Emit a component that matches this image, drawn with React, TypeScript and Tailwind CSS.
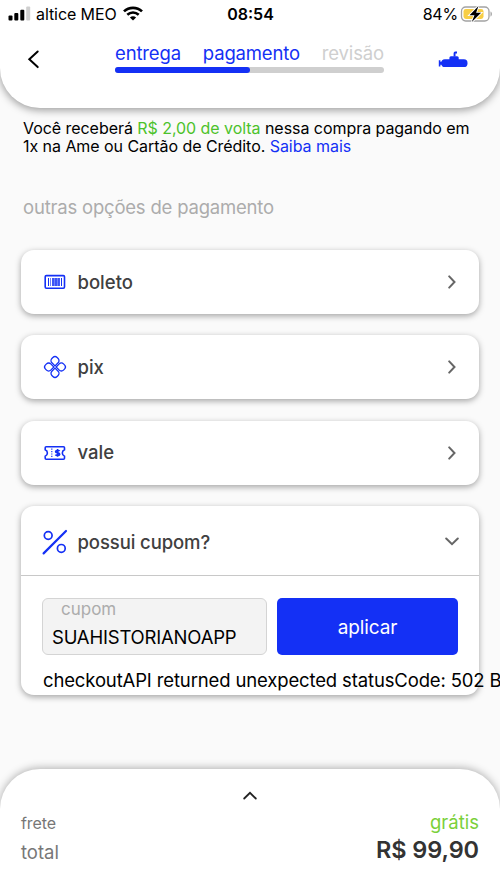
import type { ReactNode } from "react"

type Option = {
  id: string
  label: string
  icon: ReactNode
}

function SignalIcon() {
  return (
    <svg className="shrink-0" width="23" height="15" viewBox="0 0 23 15" fill="#000">
      <rect x="0.5" y="9.5" width="4" height="5" rx="1" />
      <rect x="6.3" y="7" width="4" height="7.5" rx="1" />
      <rect x="12.3" y="3.8" width="4" height="10.7" rx="1" />
      <rect x="18.2" y="0.5" width="4" height="14" rx="1" fill="#cfcfcf" />
    </svg>
  )
}

function WifiIcon() {
  return (
    <svg className="shrink-0" width="20" height="15" viewBox="0 0 20 15" fill="none" stroke="#000">
      <path d="M1 5.4C6 .6 14 .6 19 5.4" strokeWidth="2.7" />
      <path d="M4.3 8.8c3.3-3 8.1-3 11.4 0" strokeWidth="2.6" />
      <path d="M10 14.4 6.9 11.4c1.7-1.6 4.5-1.6 6.2 0z" fill="#000" stroke="none" />
    </svg>
  )
}

function BatteryIcon() {
  return (
    <svg width="33" height="18" viewBox="0 0 33 18">
      <rect x="1.5" y="2" width="27.5" height="14" rx="4.2" fill="#fff" stroke="#a3a3a3" strokeWidth="1.3" />
      <rect x="3.5" y="4" width="20" height="10" rx="2.4" fill="#f7ce46" />
      <path d="M30.5 6.5c1.9.6 1.9 4.4 0 5z" fill="#a3a3a3" />
      <path
        d="M18.5 1 9.5 10.2h5l-2.7 6.9 9.3-9.3h-5z"
        fill="#000"
        stroke="#fff"
        strokeWidth="1.8"
        paintOrder="stroke"
      />
    </svg>
  )
}

function SubmarineIcon() {
  return (
    <svg width="30" height="17" viewBox="0 0 30 17" fill="#1430f5">
      <path d="M15.6 5.5V2.2Q15.6.6 17.2.6H19v1.900h-1.500v3z" />
      <path d="M11.4 9V6.8q0-1.500 1.500-1.500h6.300q1.500 0 1.500 1.500V9z" />
      <rect x="3.3" y="8.3" width="26.2" height="7.7" rx="3.6" />
      <path d="M.8 9.3h1.600v1.500h2v3H2.400v1.700H.8z" />
    </svg>
  )
}

function BoletoIcon() {
  return (
    <svg width="22" height="16" viewBox="0 0 22 16" fill="none" stroke="#1430f5">
      <rect x="1.2" y="1.6" width="19.3" height="12.7" rx="1.2" strokeWidth="1.6" />
      <path d="M4.5 4v8M17.5 4v8" strokeWidth="1" />
      <path d="M6.5 4v8" strokeWidth="1" strokeOpacity=".6" />
      <path d="M9 4v8M12 4v8M15 4v8" strokeWidth="1.6" />
      <path d="M10.5 4v8M13.5 4v8" strokeWidth="1.4" strokeOpacity=".6" />
    </svg>
  )
}

function PixIcon() {
  const petal = "M.8.8h4.400a3 3 0 0 1 3 3v1.400a3 3 0 0 1-3 3H3.800a3 3 0 0 1-3-3z"
  return (
    <svg width="24" height="24" viewBox="-12 -12 24 24" fill="none" stroke="#1430f5" strokeWidth="1.3">
      <path d={petal} transform="rotate(45)" />
      <path d={petal} transform="rotate(135)" />
      <path d={petal} transform="rotate(225)" />
      <path d={petal} transform="rotate(315)" />
    </svg>
  )
}

function ValeIcon() {
  return (
    <svg width="22" height="16" viewBox="0 0 22 16" fill="none" stroke="#1430f5">
      <path
        d="M2.2 1.7h17.300q1 0 1 1v2.100q-2.200.9-2.200 3.200t2.200 3.200v2.100q0 1-1 1H2.200q-1 0-1-1v-2.100Q3.400 10.300 3.400 8T1.200 4.800V2.700q0-1 1-1z"
        strokeWidth="1.6"
      />
      <path d="M7.8 3.6v9.200" strokeWidth="1.2" strokeDasharray="1.2 1.2" />
      <path
        d="M15.6 6.200c-.5-.9-4-1.100-4 .5 0 1.800 4.100.7 4.100 2.600 0 1.600-3.600 1.500-4.300.3M13.600 4.100v7.700"
        strokeWidth="1.7"
      />
    </svg>
  )
}

function CouponIcon() {
  return (
    <svg width="26" height="26" viewBox="0 0 26 26" fill="none" stroke="#1430f5" strokeLinecap="round">
      <path d="M1.6 24.4 24 2" strokeWidth="2.2" />
      <circle cx="6.2" cy="6.5" r="3.9" strokeWidth="1.7" />
      <circle cx="19.3" cy="19.4" r="3.9" strokeWidth="1.7" />
    </svg>
  )
}

function ChevronRight() {
  return (
    <svg width="8" height="14" viewBox="0 0 8 14" fill="none" stroke="#666" strokeWidth="2" strokeLinecap="round">
      <path d="M1.2 1.4 6.5 7l-5.300 5.600" />
    </svg>
  )
}

export default function App() {
  const options: Option[] = [
    { id: "boleto", label: "boleto", icon: <BoletoIcon /> },
    { id: "pix", label: "pix", icon: <PixIcon /> },
    { id: "vale", label: "vale", icon: <ValeIcon /> },
  ]

  return (
    <div className="flex h-[889px] w-[500px] flex-col overflow-hidden bg-[#fafafa] font-['Inter',sans-serif] text-black">
      {/* Header */}
      <header className="h-[108px] shrink-0 rounded-b-[40px] bg-white shadow-[0_2px_9px_rgba(0,0,0,0.4)]">
        <div className="grid h-[27px] grid-cols-3 items-center pr-[7px] pl-2">
          <div className="flex items-center">
            <SignalIcon />
            <span className="mr-[6px] ml-[5px] text-base tracking-[-0.08px] whitespace-nowrap">altice MEO</span>
            <WifiIcon />
          </div>
          <span className="text-center text-base font-semibold">08:54</span>
          <div className="flex items-center justify-end gap-[2px]">
            <span className="text-base tracking-[-0.2px]">84%</span>
            <BatteryIcon />
          </div>
        </div>
        <div className="flex items-start">
          <svg
            className="mt-[23px] ml-[27px]"
            width="13"
            height="19"
            viewBox="0 0 13 19"
            fill="none"
            stroke="#000"
            strokeWidth="2"
            strokeLinecap="round"
          >
            <path d="M10.7 1.5 2.3 9.300l8.400 7.800" />
          </svg>
          <div className="mt-[13px] ml-[75px] w-[269px]">
            <div className="flex justify-between text-[18.5px] leading-[26px] tracking-[-0.15px] text-[#1430f5]">
              <span>entrega</span>
              <span>pagamento</span>
              <span className="text-[#cfcfcf]">revisão</span>
            </div>
            <div className="mt-px h-[6px] rounded-full bg-[#cfcfcf]">
              <div className="h-full w-1/2 rounded-full bg-[#1430f5]" />
            </div>
          </div>
          <div className="mt-[24px] ml-[54px]">
            <SubmarineIcon />
          </div>
        </div>
      </header>

      <main className="flex-1 px-[21px]">
        <p className="mt-[10.5px] ml-[2px] text-base leading-[18.5px] tracking-[-0.05px] whitespace-nowrap">
          Você receberá <span className="text-[#4cc22b]">R$ 2,00 de volta</span> nessa compra pagando em
          <br />
          1x na Ame ou Cartão de Crédito. <span className="text-[#1430f5]">Saiba mais</span>
        </p>

        <h2 className="mt-[37.5px] ml-[2px] text-[18.5px] leading-[28px] tracking-[-0.2px] text-[#acacac]">
          outras opções de pagamento
        </h2>

        {/* Payment options */}
        <div className="mt-[29px] flex flex-col gap-[21.3px]">
          {options.map((option) => (
            <button
              key={option.id}
              className="flex h-16 items-center rounded-[13px] bg-white pr-[23px] shadow-[0_2px_6px_rgba(0,0,0,0.35)]"
            >
              <span className="flex w-[56.5px] justify-center pl-[11px]">{option.icon}</span>
              <span className="flex-1 pt-px text-left text-[18.5px] font-[450] text-[#404040]">{option.label}</span>
              <ChevronRight />
            </button>
          ))}

          {/* Coupon */}
          <div className="h-[189.5px] rounded-[13px] bg-white shadow-[0_2px_6px_rgba(0,0,0,0.35)]">
            <div className="flex h-[70px] items-center border-b-[1.5px] border-[#c8c8c8] pr-5">
              <span className="flex w-[56.5px] justify-center pt-[3px] pl-[11px]">
                <CouponIcon />
              </span>
              <span className="flex-1 pt-[4px] text-[18.5px] font-[450] tracking-[-0.1px] text-[#404040]">
                possui cupom?
              </span>
              <svg
                className="mt-[2px]"
                width="14"
                height="9"
                viewBox="0 0 14 9"
                fill="none"
                stroke="#666"
                strokeWidth="2"
                strokeLinecap="round"
              >
                <path d="m1.200 1.500 5.800 5.600 5.800-5.600" />
              </svg>
            </div>
            <div className="mt-[22px] flex gap-[10px] px-[21px]">
              <div className="h-[57.5px] w-[225px] rounded-[6px] border border-[#d4d4d4] bg-[#f3f3f3]">
                <div className="pl-[18px] text-[17px] leading-[21px] text-[#acacac]">cupom</div>
                <div className="mt-[5px] pl-[9px] text-[18.5px] leading-[24px] tracking-[-0.2px]">SUAHISTORIANOAPP</div>
              </div>
              <button className="h-[57.5px] flex-1 rounded-[5px] bg-[#1430f5] pt-[3px] text-[19px] tracking-[-0.1px] text-white">
                aplicar
              </button>
            </div>
            {/* The error message runs past the card's edge */}
            <p className="mt-[13px] ml-[22px] text-[18.5px] leading-[24px] tracking-[-0.14px] whitespace-nowrap">
              checkoutAPI returned unexpected statusCode: 502 B
            </p>
          </div>
        </div>
      </main>

      {/* Summary */}
      <footer className="h-[120px] shrink-0 rounded-t-[40px] bg-white px-[21px] shadow-[0_-1px_9px_rgba(0,0,0,0.3)]">
        <div className="flex h-[41px] justify-center pt-[22px]">
          <svg width="14" height="9" viewBox="0 0 14 9" fill="none" stroke="#222" strokeWidth="1.8" strokeLinecap="round">
            <path d="M1.2 7.5 7 1.800l5.800 5.700" />
          </svg>
        </div>
        <div className="flex h-[25px] items-center justify-between">
          <span className="text-base tracking-[-0.1px] text-[#777]">frete</span>
          <span className="pt-px text-[18.5px] text-[#7ad03a]">grátis</span>
        </div>
        <div className="flex h-[30px] items-center justify-between">
          <span className="pt-[6px] text-[18.5px] text-[#777]">total</span>
          <span className="text-[23.5px] font-semibold tracking-[-0.1px] text-[#333]">R$ 99,90</span>
        </div>
      </footer>
    </div>
  )
}
